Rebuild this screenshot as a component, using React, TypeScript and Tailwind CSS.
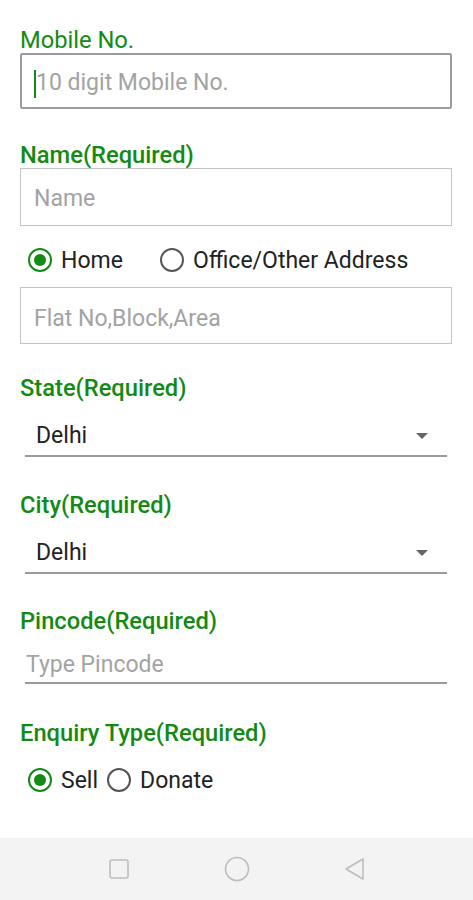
import React, { useState } from "react";

const GREEN = "text-[#138a13]";

const Radio: React.FC<{ checked: boolean; label: string; onClick: () => void; className?: string }> = ({ checked, label, onClick, className }) => (
  <button onClick={onClick} className={`flex items-center ${className ?? ""}`}>
    <span className={`w-[24px] h-[24px] rounded-full border-2 flex items-center justify-center ${checked ? "border-[#138a13]" : "border-[#555]"}`}>
      {checked && <span className="w-[12px] h-[12px] rounded-full bg-[#138a13]" />}
    </span>
    <span className="ml-[9px] text-[23px] text-[#222] leading-none">{label}</span>
  </button>
);

const Select: React.FC<{ value: string }> = ({ value }) => (
  <div className="mx-[5px] h-[56px] pt-[16px] flex items-center justify-between border-b-2 border-[#9a9a9a] pl-[11px] pr-[19px]">
    <span className="text-[23px] text-[#222]">{value}</span>
    <svg width="12" height="6" viewBox="0 0 12 6"><path d="M0 0h12L6 6z" fill="#666" /></svg>
  </div>
);

const App: React.FC = () => {
  const [addr, setAddr] = useState<"home" | "office">("home");
  const [kind, setKind] = useState<"sell" | "donate">("sell");

  return (
    <div className="w-[473px] h-[900px] bg-white flex flex-col font-['Roboto','Liberation_Sans',sans-serif]">
      <div className="flex-1 pl-[20px] pr-[21px] pt-[27px]">
        <p className={`text-[23.7px] leading-[26px] ${GREEN}`}>Mobile No.</p>
        <div className="h-[56px] pt-[5px] border-2 border-[#9b9b9b] rounded-[2px] flex items-center pl-[12px]">
          <span className="w-[2px] h-[28px] bg-[#138a13]" />
          <span className="text-[23px] text-[#a3a3a3]">10 digit Mobile No.</span>
        </div>

        <p className={`mt-[33px] text-[23.7px] leading-[26px] font-medium ${GREEN}`}>Name(Required)</p>
        <div className="h-[58px] pt-[4px] border border-[#c4c4c4] flex items-center pl-[13px]">
          <span className="text-[23px] text-[#a3a3a3]">Name</span>
        </div>

        <div className="mt-[22px] h-[24px] flex items-center pl-[8px]">
          <Radio checked={addr === "home"} label="Home" onClick={() => setAddr("home")} />
          <Radio checked={addr === "office"} label="Office/Other Address" onClick={() => setAddr("office")} className="ml-[37px]" />
        </div>

        <div className="mt-[15px] h-[57px] pt-[7px] border border-[#c4c4c4] flex items-center pl-[13px]">
          <span className="text-[23px] text-[#a3a3a3]">Flat No,Block,Area</span>
        </div>

        <p className={`mt-[31px] text-[23.7px] leading-[26px] font-medium ${GREEN}`}>State(Required)</p>
        <Select value="Delhi" />

        <p className={`mt-[35px] text-[23.7px] leading-[26px] font-medium ${GREEN}`}>City(Required)</p>
        <Select value="Delhi" />

        <p className={`mt-[34px] text-[23.7px] leading-[26px] font-medium ${GREEN}`}>Pincode(Required)</p>
        <div className="mx-[5px] h-[50px] pt-[15px] flex items-center border-b-2 border-[#9a9a9a] pl-[1px]">
          <span className="text-[23px] text-[#a3a3a3]">Type Pincode</span>
        </div>

        <p className={`mt-[36px] text-[23.7px] leading-[26px] font-medium ${GREEN}`}>Enquiry Type(Required)</p>
        <div className="mt-[22px] h-[24px] flex items-center pl-[8px]">
          <Radio checked={kind === "sell"} label="Sell" onClick={() => setKind("sell")} />
          <Radio checked={kind === "donate"} label="Donate" onClick={() => setKind("donate")} className="ml-[9px]" />
        </div>
      </div>

      <div className="h-[62px] bg-[#f3f3f3] flex items-center justify-center gap-[94px]">
        <svg width="22" height="22" viewBox="0 0 22 22"><rect x="2" y="2" width="18" height="18" rx="2" fill="none" stroke="#bdbdbd" strokeWidth="1.6" /></svg>
        <svg width="26" height="26" viewBox="0 0 26 26"><circle cx="13" cy="13" r="11.5" fill="none" stroke="#bdbdbd" strokeWidth="1.6" /></svg>
        <svg width="22" height="24" viewBox="0 0 22 24"><path d="M19 2v20L2 12z" fill="none" stroke="#bdbdbd" strokeWidth="1.6" strokeLinejoin="round" /></svg>
      </div>
    </div>
  );
};

export default App;
